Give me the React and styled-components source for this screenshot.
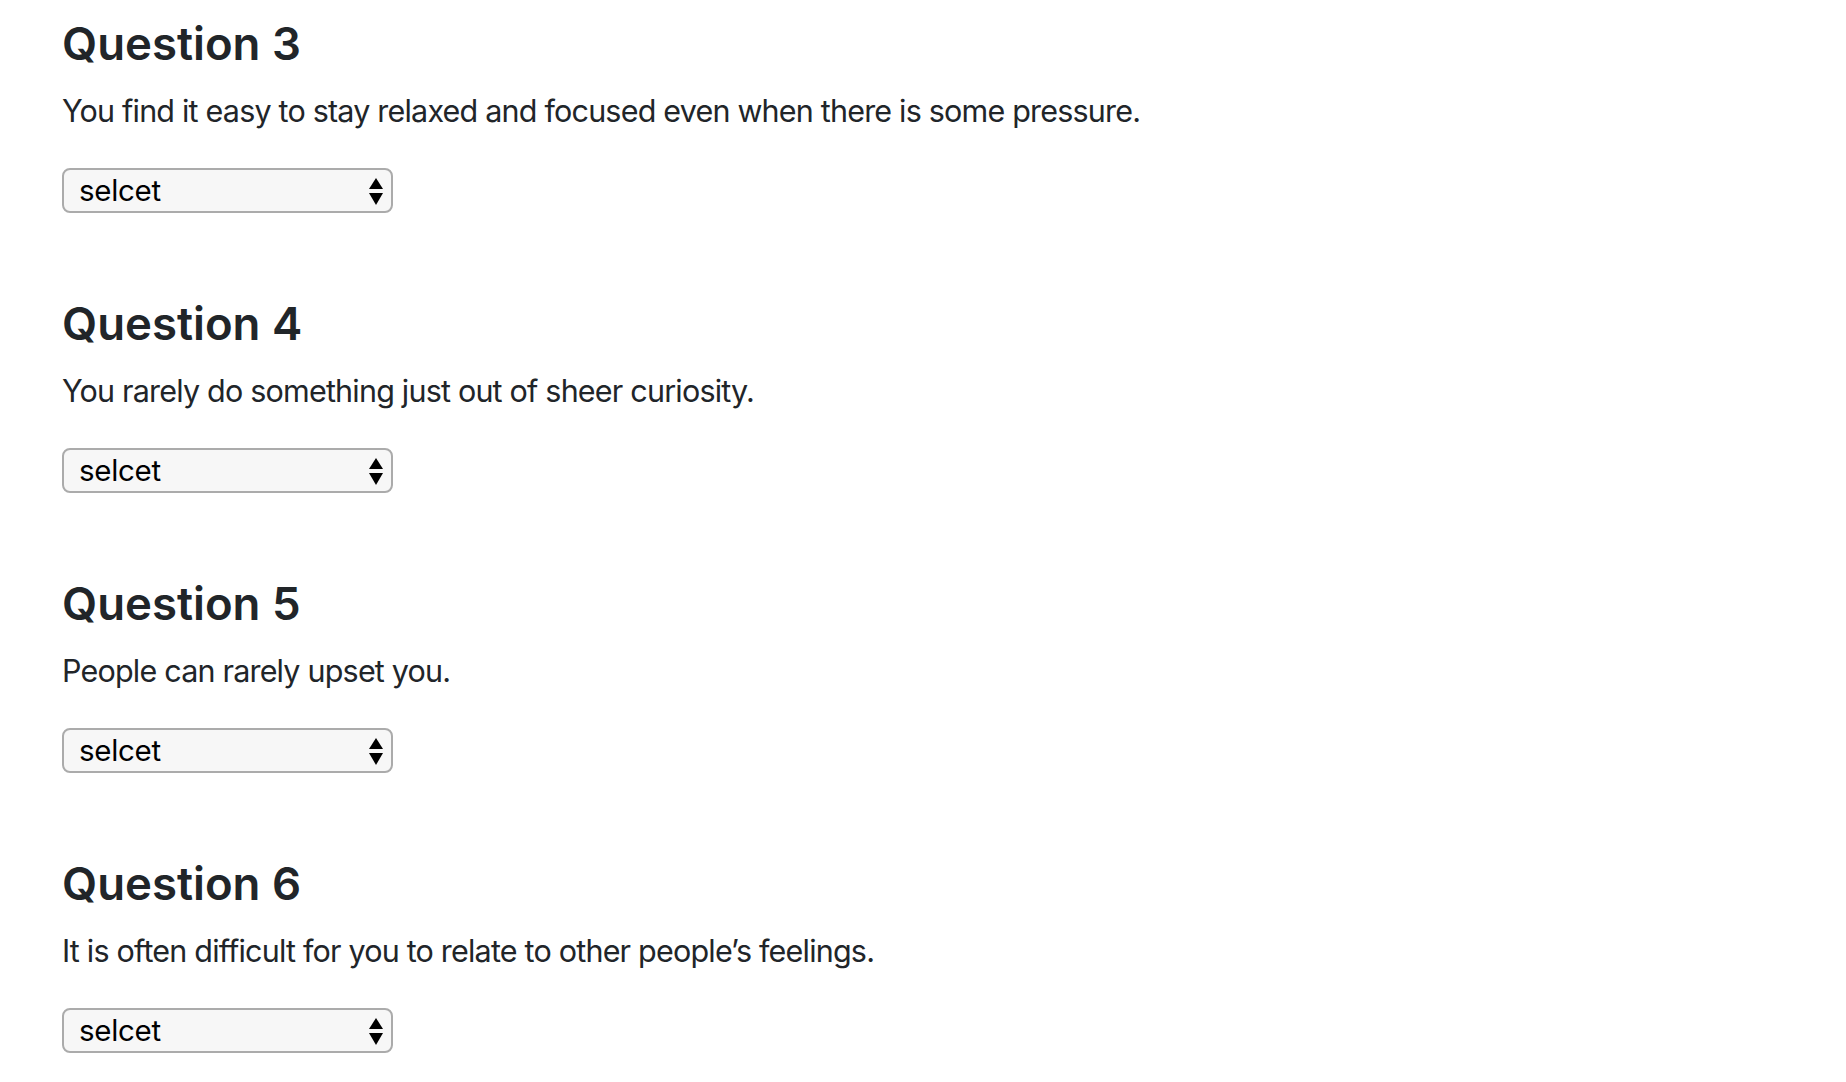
import React from "react";
import styled, { createGlobalStyle } from "styled-components";

const Global = createGlobalStyle`
  html, body { margin: 0; padding: 0; background: #ffffff; }
  body { font-family: Inter, "Liberation Sans", Arial, sans-serif; color: #212529; }
`;

const Page = styled.main`
  display: flex;
  flex-direction: column;
  gap: 83px;
  padding: 16px 0 0 62px;
`;

const Block = styled.section`
  display: flex;
  flex-direction: column;
  align-items: flex-start;
`;

const Title = styled.h3`
  margin: 0;
  font-family: Inter, "Liberation Sans", Arial, sans-serif;
  font-weight: 600;
  font-size: 45.5px;
  line-height: 55px;
  color: #212529;
`;

const Prompt = styled.p`
  margin: 17px 0 0;
  font-family: Inter, "Liberation Sans", Arial, sans-serif;
  font-size: 30.5px;
  letter-spacing: -0.8px;
  line-height: 46px;
  color: #212529;
`;

const SelectWrap = styled.div`
  position: relative;
  margin-top: 34px;
  width: 331px;
  height: 45px;
`;

const Select = styled.select`
  appearance: none;
  -webkit-appearance: none;
  box-sizing: border-box;
  width: 100%;
  height: 100%;
  margin: 0;
  padding: 0 36px 0 15px;
  border: 2px solid #ababab;
  border-radius: 8px;
  background: #f7f7f7;
  color: #000;
  font-family: Inter, "Liberation Sans", Arial, sans-serif;
  font-size: 29.5px;
  letter-spacing: -0.3px;
  line-height: 41px;
`;

const Arrows = styled.svg`
  position: absolute;
  right: 10px;
  top: 10px;
  width: 14px;
  height: 27px;
  pointer-events: none;
`;

const questions = [
  { n: 3, text: "You find it easy to stay relaxed and focused even when there is some pressure." },
  { n: 4, text: "You rarely do something just out of sheer curiosity." },
  { n: 5, text: "People can rarely upset you." },
  { n: 6, text: "It is often difficult for you to relate to other people\u2019s feelings." },
];

function Question({ n, text }) {
  return (
    <Block>
      <Title>Question {n}</Title>
      <Prompt>{text}</Prompt>
      <SelectWrap>
        <Select defaultValue="">
          <option value="">selcet</option>
          <option value="1">Agree</option>
          <option value="2">Neutral</option>
          <option value="3">Disagree</option>
        </Select>
        <Arrows viewBox="0 0 14 27">
          <polygon points="7,0 14,11 0,11" fill="#000" />
          <polygon points="0,15 14,15 7,27" fill="#000" />
        </Arrows>
      </SelectWrap>
    </Block>
  );
}

export default function App() {
  return (
    <>
      <Global />
      <Page>
        {questions.map((q) => (
          <Question key={q.n} {...q} />
        ))}
      </Page>
    </>
  );
}
